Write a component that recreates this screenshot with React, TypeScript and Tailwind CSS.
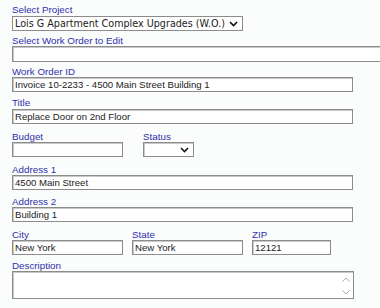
import React from "react";

const lbl = "block h-[11px] leading-[11px] text-[9.8px] text-[#3030aa] font-['Liberation_Sans',Arial,sans-serif]";
const inp = "block h-[15px] box-border border border-[#8c8c8c] bg-white px-[2px] text-[9.6px] leading-[13px] text-[#222] font-['Liberation_Sans',Arial,sans-serif] outline-none shadow-[inset_1px_1px_0_#c8c8c8]";

function Chevron({ className }: { className?: string }) {
  return (
    <svg className={className} width="9" height="6" viewBox="0 0 9 6">
      <polyline points="1,1 4.5,4.5 8,1" fill="none" stroke="#111" strokeWidth="1.6" />
    </svg>
  );
}

export default function App() {
  return (
    <div className="w-[380px] h-[308px] bg-[#fbfcfc] pl-[12px] pt-[4px] overflow-hidden">
      <div>
        <span className={lbl}>Select Project</span>
        <div className="mt-[1px] relative w-[231px] h-[15px] border border-[#8c8c8c] bg-white box-border flex items-center pl-[2px]">
          <span className="text-[9.6px] leading-[13px] text-[#222] font-['DejaVu_Sans',Verdana,sans-serif] whitespace-nowrap">
            Lois G Apartment Complex Upgrades (W.O.)
          </span>
          <Chevron className="absolute right-[4px] top-[4px]" />
        </div>
      </div>
      <div className="mt-[4px]">
        <span className={lbl}>Select Work Order to Edit</span>
        <div className={inp + " w-[380px] h-[16px]"}></div>
      </div>
      <div className="mt-[4px]">
        <span className={lbl}>Work Order ID</span>
        <div className={inp + " w-[341px]"}>Invoice 10-2233 - 4500 Main Street Building 1</div>
      </div>
      <div className="mt-[5px]">
        <span className={lbl}>Title</span>
        <div className={inp + " w-[341px] mt-[1px]"}>Replace Door on 2nd Floor</div>
      </div>
      <div className="mt-[7px] flex gap-[20px]">
        <div>
          <span className={lbl}>Budget</span>
          <div className={inp + " w-[111px]"}></div>
        </div>
        <div>
          <span className={lbl}>Status</span>
          <div className={inp + " w-[51px] relative"}>
            <Chevron className="absolute right-[4px] top-[4px]" />
          </div>
        </div>
      </div>
      <div className="mt-[7px]">
        <span className={lbl}>Address 1</span>
        <div className={inp + " w-[341px]"}>4500 Main Street</div>
      </div>
      <div className="mt-[6px]">
        <span className={lbl}>Address 2</span>
        <div className={inp + " w-[341px]"}>Building 1</div>
      </div>
      <div className="mt-[7px] flex gap-[9px]">
        <div>
          <span className={lbl}>City</span>
          <div className={inp + " w-[111px]"}>New York</div>
        </div>
        <div>
          <span className={lbl}>State</span>
          <div className={inp + " w-[111px]"}>New York</div>
        </div>
        <div>
          <span className={lbl}>ZIP</span>
          <div className={inp + " w-[79px]"}>12121</div>
        </div>
      </div>
      <div className="mt-[5px]">
        <span className={lbl}>Description</span>
        <div className={inp + " w-[342px] h-[28px] relative"}>
          <svg className="absolute right-[3px] top-[5px]" width="8" height="5" viewBox="0 0 8 5">
            <polyline points="0.5,4.5 4,1 7.5,4.5" fill="none" stroke="#aaa" strokeWidth="1" />
          </svg>
          <svg className="absolute right-[3px] bottom-[3px]" width="8" height="5" viewBox="0 0 8 5">
            <polyline points="0.5,0.5 4,4 7.5,0.5" fill="none" stroke="#aaa" strokeWidth="1" />
          </svg>
        </div>
      </div>
    </div>
  );
}
